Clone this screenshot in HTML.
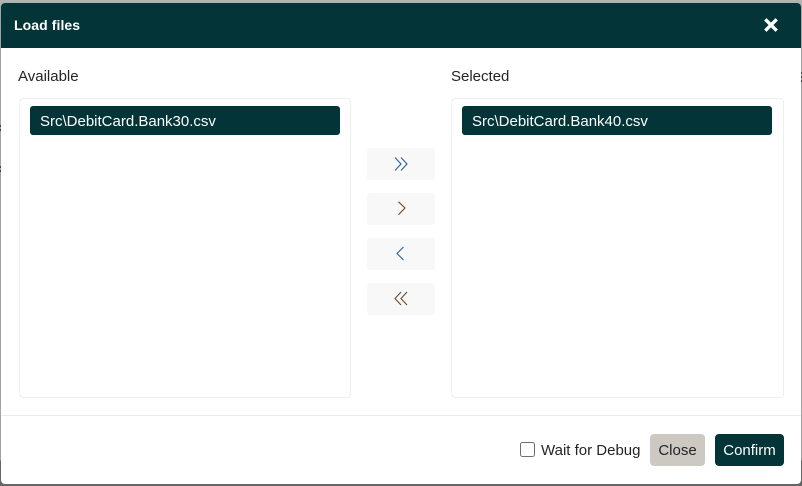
<!DOCTYPE html>
<html>
<head>
<meta charset="utf-8">
<style>
html,body{margin:0;padding:0;width:802px;height:486px;overflow:hidden;background:#a2a2a2;font-family:"Liberation Sans",sans-serif;}
.back{position:absolute;left:0;top:0;width:802px;height:486px;background:linear-gradient(#b5b5b5 0,#a2a2a2 12px,#a2a2a2 460px,#666 461px,#666 100%);}
.tick{position:absolute;width:1px;height:2px;background:#444;}
.modal{position:absolute;left:1px;top:3px;width:800px;height:481px;background:#fff;border-radius:4px;overflow:hidden;}
.head{position:absolute;left:0;top:0;width:800px;height:45px;background:#033438;}
.title{position:absolute;left:13px;top:14px;font-size:14px;line-height:16px;font-weight:bold;color:#fff;letter-spacing:.08px;}
.x{position:absolute;left:762px;top:14px;}
.lbl{position:absolute;font-size:15px;line-height:16px;color:#212529;top:66px;}
.box{position:absolute;top:95px;width:331px;height:298px;border:1px solid #f0eeeb;border-radius:4px;background:#fff;}
.item{position:absolute;left:10px;top:7px;width:310px;height:29px;background:#033438;border-radius:3px;color:#fff;font-size:15px;line-height:31px;text-indent:10px;}
.btn{position:absolute;left:366px;width:68px;height:32px;background:#f8f8f8;border-radius:3px;}
.btn svg{position:absolute;left:0;top:0;}
.line{position:absolute;left:0;top:412px;width:800px;height:1px;background:#ebebeb;}
.chk{position:absolute;left:519px;top:439px;width:13px;height:13px;border:1px solid #6f6f6f;border-radius:2.5px;background:#fff;}
.dbg{position:absolute;left:540px;top:440px;font-size:15px;line-height:16px;color:#212529;}
.b{position:absolute;top:431px;height:32px;border-radius:4px;font-size:15px;line-height:34px;text-align:center;}
.close{left:649px;width:55px;background:#cdc8c2;color:#212529;}
.confirm{left:714px;width:69px;background:#033438;color:#fff;}
</style>
</head>
<body>
<div class="back"></div>
<div class="tick" style="left:0;top:125px"></div>
<div class="tick" style="left:0;top:129px"></div>
<div class="tick" style="left:0;top:166px"></div>
<div class="tick" style="left:0;top:170px"></div>
<div class="tick" style="left:801px;top:72px"></div>
<div class="tick" style="left:801px;top:76px"></div>
<div class="tick" style="left:801px;top:80px"></div>
<div class="modal">
  <div class="head">
    <div class="title">Load files</div>
    <svg class="x" width="16" height="16" viewBox="0 0 16 16"><path d="M2.300 2.300L13.700 13.700M13.700 2.300L2.300 13.700" stroke="#fff" stroke-width="3.400" fill="none"/></svg>
  </div>
  <div class="lbl" style="left:17px">Available</div>
  <div class="lbl" style="left:450px">Selected</div>
  <div class="box" style="left:18px;width:330px"><div class="item">Src\DebitCard.Bank30.csv</div></div>
  <div class="box" style="left:450px"><div class="item">Src\DebitCard.Bank40.csv</div></div>
  <div class="btn" style="top:145px"><svg width="68" height="32"><path d="M28 9.500L34 16L28 22.500M34 9.500L40 16L34 22.500" stroke="#2a5f96" stroke-width="1.100" fill="none"/></svg></div>
  <div class="btn" style="top:190px"><svg width="68" height="32"><path d="M31.500 8.800L38 15L31.500 21.700" stroke="#6b4a2c" stroke-width="1.100" fill="none"/></svg></div>
  <div class="btn" style="top:235px"><svg width="68" height="32"><path d="M36.500 9L30 15.500L36.500 22" stroke="#2a5f96" stroke-width="1.100" fill="none"/></svg></div>
  <div class="btn" style="top:280px"><svg width="68" height="32"><path d="M34 9L28 15.500L34 22M40 9L34 15.500L40 22" stroke="#6b4a2c" stroke-width="1.100" fill="none"/></svg></div>
  <div class="line"></div>
  <div class="chk"></div>
  <div class="dbg">Wait for Debug</div>
  <div class="b close">Close</div>
  <div class="b confirm">Confirm</div>
</div>
</body>
</html>
